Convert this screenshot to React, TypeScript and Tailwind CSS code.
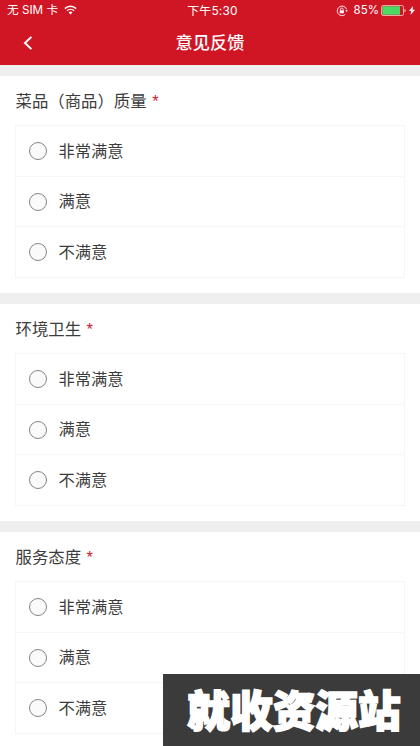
type Question = {
  id: string;
  title: string;
};

const questions: Question[] = [
  { id: "quality", title: "菜品（商品）质量" },
  { id: "hygiene", title: "环境卫生" },
  { id: "service", title: "服务态度" },
];

const options = ["非常满意", "满意", "不满意"];

function StatusBar() {
  return (
    <div className="grid h-[22px] grid-cols-[1fr_auto_1fr] items-center pl-[7px] pr-[5px] font-['Inter','Noto_Sans_CJK_SC',sans-serif] text-[11.7px] leading-none">
      <div className="flex items-center">
        <span>无 SIM 卡</span>
        <svg className="mb-px ml-[6px]" width="13" height="10" viewBox="0 0 13 10" fill="none" stroke="currentColor">
          <path d="M0.9 3.6a8 8 0 0 1 11.2 0" strokeWidth="1.5" />
          <path d="M3 5.8a5 5 0 0 1 7 0" strokeWidth="1.4" />
          <path d="M6.5 9.5 4.6 7.4a2.7 2.7 0 0 1 3.8 0z" fill="currentColor" stroke="none" />
        </svg>
      </div>
      <span className="pl-[3px] text-[11.9px] tracking-[0.2px]">下午5:30</span>
      <div className="flex items-center justify-end">
        <svg className="mb-px" width="12" height="12" viewBox="0 0 12 12" fill="none" stroke="currentColor">
          <path d="M10.6 4.3A4.8 4.8 0 1 0 9.2 9.5" strokeWidth="0.9" />
          <path d="M9.2 5.2h2.6L10.6 7z" fill="currentColor" stroke="none" />
          <path d="M4.5 5.4V4.3a1.3 1.3 0 0 1 2.6 0v1.1" strokeWidth="0.8" />
          <rect x="3.7" y="5.2" width="4.2" height="3.1" rx="0.4" fill="currentColor" stroke="none" />
        </svg>
        <span className="ml-[6px] text-[11.5px]">85%</span>
        <svg className="mb-px ml-[2px]" width="25" height="11" viewBox="0 0 25 11">
          <rect x="0.5" y="0.5" width="22" height="10" rx="1.6" fill="none" stroke="#f3b7b9" strokeWidth="0.9" />
          <rect x="1.3" y="1.3" width="17.7" height="8.4" rx="0.6" fill="#4cd964" />
          <path d="M23.5 3.7v3.6a1.9 1.9 0 0 0 0-3.6z" fill="#f3b7b9" />
        </svg>
        <svg className="mb-px ml-[3px]" width="6" height="9" viewBox="0 0 6 9" fill="currentColor">
          <path d="M4.1 0 0 5h2.3L1.5 9 6 3.7H3.6z" />
        </svg>
      </div>
    </div>
  );
}

function QuestionCard({ question }: { question: Question }) {
  return (
    <section className="border-t-[11px] border-[#efefef] bg-white px-[15px] pb-[15px]">
      <h2 className="flex h-[49px] items-center pl-[0.5px] pt-px text-[16.4px] leading-none">
        {question.title}
        <span className="ml-[5.5px] text-[#c8202f]">*</span>
      </h2>
      <ul className="grid h-[153px] grid-rows-[51px_50px_50px] divide-y divide-[#f7f7f7] border border-[#f6f6f6]">
        {options.map((o) => (
          <li key={o} className="flex items-center pl-[13px]">
            <span className="size-[18px] shrink-0 rounded-full border border-[#858585] bg-[#fafafa]" />
            <span className="ml-[11.5px] text-[16.3px] leading-none">{o}</span>
          </li>
        ))}
      </ul>
    </section>
  );
}

export default function App() {
  return (
    <div className="relative h-[746px] w-[420px] overflow-hidden bg-white font-['Liberation_Sans','Noto_Sans_CJK_SC',sans-serif] text-[#3c3c3c]">
      <header className="h-[65px] bg-[#d01624] text-white">
        <StatusBar />
        <div className="grid h-[43px] grid-cols-[1fr_auto_1fr] items-center">
          <svg className="mb-[2px] ml-[23px]" width="10" height="14" viewBox="0 0 10 14" fill="none" stroke="currentColor" strokeWidth="2">
            <path d="M8.4 0.9 2 7l6.4 6.1" />
          </svg>
          <h1 className="pt-px text-[17.2px] font-medium leading-none">意见反馈</h1>
        </div>
      </header>

      {questions.map((q) => (
        <QuestionCard key={q.id} question={q} />
      ))}

      <div className="absolute bottom-0 right-0 flex h-[72px] w-[257px] items-center justify-center bg-[#3b3b3b] pb-[4px] pl-[5px] font-['Noto_Sans_CJK_SC',sans-serif] text-[42.7px] font-black leading-none text-white [-webkit-text-stroke:1.7px_white]">
        就收资源站
      </div>
    </div>
  );
}
